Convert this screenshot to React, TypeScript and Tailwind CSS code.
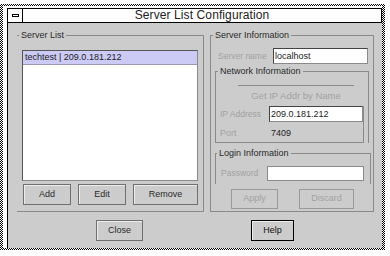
import React from "react";

const btn =
  "flex items-center justify-center h-[21px] border border-[#6f6f6f] bg-[#cccccc] shadow-[inset_1px_1px_0_#ececec] text-[9px] text-[#2a2a2a]";
const disBtn =
  "flex items-center justify-center h-[20px] border border-[#9a9a9a] bg-[#cccccc] text-[9px] text-[#a2a2a2]";

export default function App() {
  return (
    <div className="w-[390px] h-[256px] bg-white pt-[4px] font-['Liberation_Sans',Arial,sans-serif] overflow-hidden">
      <div className="w-[385px] h-[246px] bg-[image:repeating-conic-gradient(#000_0_25%,#fff_0_50%)] bg-[length:2px_2px] pl-[3px] pr-[3px] pt-[2px] pb-[2px]">
        <div className="w-full h-full bg-white pl-[4px] pt-[2px]">
          <div className="w-[375px] h-[240px] flex flex-col">
            {/* title bar */}
            <div className="h-[15px] border border-black bg-white flex">
              <div className="w-[15px] h-full border-r border-black flex items-center justify-center">
                <div className="w-[7px] h-[3px] border border-black" />
              </div>
              <div className="flex-1 text-center text-[12px] leading-[13px] text-[#222] tracking-[0.1px]">
                Server List Configuration
              </div>
            </div>
            {/* body */}
            <div className="h-[225px] bg-[#cccccc] border-l border-black pl-[9px] pt-[6px] flex flex-col">
              <div className="flex gap-[6px] items-start">
                {/* Server List */}
                <fieldset className="w-[187px] h-[183px] m-0 p-0 border-t border-r border-b border-l-0 border-[#8a8a8a] min-w-0">
                  <legend className="ml-[2px] px-[2px] text-[9px] leading-[12px] text-[#2a2a2a]">Server List</legend>
                  <div className="pl-[5px] pt-[9px] flex flex-col">
                    <div className="w-[176px] h-[131px] bg-white border border-[#8a8a8a] border-l-[#555] border-t-[#555]">
                      <div className="h-[14px] bg-[#cbcbf5] border-b border-[#9a9ab8] pl-[2px] text-[9px] leading-[13px] text-[#222]">
                        techtest | 209.0.181.212
                      </div>
                    </div>
                    <div className="flex mt-[3px] ml-[1px] gap-[7px]">
                      <div className={`${btn} w-[48px]`}>Add</div>
                      <div className={`${btn} w-[48px]`}>Edit</div>
                      <div className={`${btn} w-[65px]`}>Remove</div>
                    </div>
                  </div>
                </fieldset>
                {/* Server Information */}
                <fieldset className="w-[164px] h-[183px] m-0 p-0 border border-[#8a8a8a] min-w-0">
                  <legend className="ml-[2px] px-[2px] text-[9px] leading-[12px] text-[#2a2a2a]">Server Information</legend>
                  <div className="flex flex-col">
                    <div className="flex items-center mt-[7px] pl-[7px]">
                      <span className="w-[55px] text-[8.5px] text-[#a2a2a2]">Server name</span>
                      <div className="w-[95px] h-[16px] bg-white border border-[#8a8a8a] border-l-[#444] border-t-[#444] text-[9px] leading-[14px] pl-[1px] text-[#222]">
                        localhost
                      </div>
                    </div>
                    {/* Network */}
                    <fieldset className="ml-[4px] mt-[1px] w-[154px] m-0 p-0 border border-b-0 border-[#8a8a8a] min-w-0">
                      <legend className="ml-[2px] px-[2px] text-[9px] leading-[12px] text-[#2a2a2a]">Network Information</legend>
                      <div className="flex flex-col">
                        <div className="ml-[22px] mt-[8px] w-[116px] h-[20px] border-t border-[#8a8a8a] text-center text-[9.5px] leading-[19px] text-[#a2a2a2]">
                          Get IP Addr by Name
                        </div>
                        <div className="mt-[1px] w-[148px] border-r border-b border-[#8a8a8a] flex flex-col pb-[1px]">
                          <div className="flex items-center h-[16px] pl-[4px]">
                            <span className="w-[49px] text-[8.5px] text-[#a2a2a2]">IP Address</span>
                            <div className="w-[94px] h-[16px] bg-white border border-[#8a8a8a] border-l-[#444] border-t-[#444] text-[9px] leading-[14px] pl-[1px] text-[#222]">
                              209.0.181.212
                            </div>
                          </div>
                          <div className="flex items-center h-[14px] mt-[5px] pl-[4px]">
                            <span className="w-[51px] text-[9px] text-[#a2a2a2]">Port</span>
                            <span className="text-[9px] text-[#222]">7409</span>
                          </div>
                        </div>
                      </div>
                    </fieldset>
                    {/* Login */}
                    <fieldset className="ml-[4px] mt-[4px] w-[156px] m-0 p-0 border border-b-0 border-[#8a8a8a] min-w-0">
                      <legend className="ml-[1px] px-[2px] text-[9px] leading-[12px] text-[#2a2a2a]">Login Information</legend>
                      <div className="flex items-center mt-[7px] mb-[3px] pl-[5px]">
                        <span className="w-[46px] text-[8.5px] text-[#a2a2a2]">Password</span>
                        <div className="w-[97px] h-[15px] bg-white border border-[#8a8a8a]" />
                      </div>
                    </fieldset>
                    <div className="flex mt-[5px] ml-[20px] gap-[21px]">
                      <div className={`${disBtn} w-[47px]`}>Apply</div>
                      <div className={`${disBtn} w-[55px]`}>Discard</div>
                    </div>
                  </div>
                </fieldset>
              </div>
              <div className="flex mt-[8px]">
                <div className={`${btn} ml-[79px] w-[47px] border-[#3c3c3c]`}>Close</div>
                <div className={`${btn} ml-[108px] w-[43px] border-black text-[#111]`}>Help</div>
              </div>
            </div>
          </div>
        </div>
      </div>
    </div>
  );
}
